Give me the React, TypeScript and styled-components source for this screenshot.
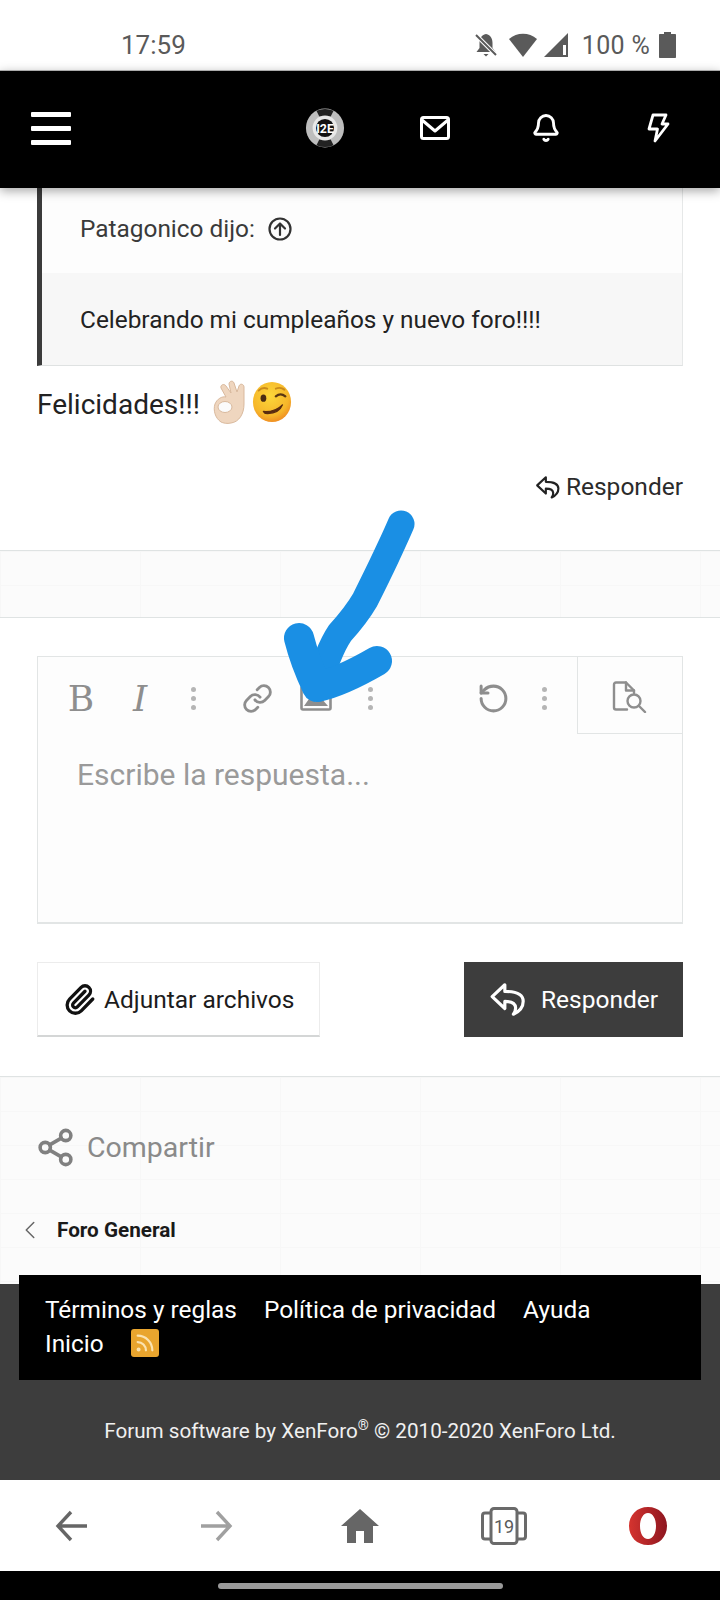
import styled, { createGlobalStyle } from "styled-components";
import { Bell, Link, Paperclip, Rss, RotateCcw, Share2, ChevronLeft } from "lucide-react";

const GlobalStyle = createGlobalStyle`
  html, body {
    margin: 0;
    padding: 0;
    background: #fff;
  }
  * {
    box-sizing: border-box;
  }
`;

const Page = styled.div`
  position: relative;
  width: 720px;
  height: 1600px;
  overflow: hidden;
  background: #fff;
  color: #222;
  font-family: Roboto, "Liberation Sans", sans-serif;
`;
const StatusBar = styled.div`
  height: 70px;
  padding: 20px 44px 0 121px;
  display: flex;
  align-items: center;
  justify-content: space-between;
  color: #5a5a5a;
  font-size: 26px;
`;
const StatusIcons = styled.div`
  display: flex;
  align-items: center;
  gap: 4px;
`;
const BatteryLabel = styled.span`
  margin: 0 5px 0 9px;
  font-size: 25px;
  letter-spacing: 0.3px;
`;
const NavBar = styled.div`
  position: relative;
  z-index: 2;
  height: 118px;
  padding-bottom: 3px;
  background: #000;
  border-top: 1px solid #aaa;
  box-shadow: 0 3px 10px rgba(0, 0, 0, 0.35);
  display: grid;
  grid-template-columns: 270px 110px 110px 112px 112px;
  align-items: center;
  color: #fff;
`;
const NavCell = styled.div`
  display: flex;
  justify-content: center;
  align-items: center;
`;
const Burger = styled.div`
  width: 40px;
  margin-left: 31px;
  display: flex;
  flex-direction: column;
  gap: 9px;

  span {
    height: 5px;
    background: #fff;
    border-radius: 1px;
  }
`;
const Quote = styled.div`
  margin: 0 37px;
  border-left: 5px solid #3b3b3b;
  border-right: 1px solid #e6e8e8;
  border-bottom: 1px solid #dfe2e2;
`;
const QuoteHead = styled.div`
  height: 85px;
  padding: 3px 0 7px 38px;
  background: #fdfdfd;
  display: flex;
  align-items: center;
  gap: 13px;
  font-size: 24.4px;
  color: #3a3a3a;
`;
const QuoteBody = styled.div`
  height: 92px;
  padding-left: 38px;
  background: #f7f7f7;
  display: flex;
  align-items: center;
  font-size: 24.4px;
`;
const Message = styled.div`
  height: 76px;
  margin: 0 37px;
  padding-top: 1px;
  display: flex;
  align-items: center;
  font-size: 28px;
`;
const Emojis = styled.div`
  margin: -6px 0 0 13px;
  display: flex;
  align-items: center;
  gap: 3px;
`;
const PostActions = styled.div`
  height: 108px;
  margin: 0 37px;
  display: flex;
  justify-content: flex-end;
  align-items: flex-start;
  padding-top: 30px;
`;
const ActionLink = styled.div`
  display: flex;
  align-items: center;
  gap: 5px;
  font-size: 24.5px;
  color: #2b2b2b;
`;
const Band = styled.div`
  height: 68px;
  background-color: #fbfbfb;
  background-image: linear-gradient(#f7f7f7 1px, transparent 1px), linear-gradient(90deg, #f7f7f7 1px, transparent 1px);
  background-size: 140px 34px;
  border-top: 1px solid #dfe3e3;
  border-bottom: 1px solid #dfe3e3;
`;
const ReplyArea = styled.div`
  height: 458px;
  padding: 38px 37px 0;
`;
const Editor = styled.div`
  height: 268px;
  background: #fdfdfd;
  border: 1px solid #e2e5e5;
  border-bottom-width: 2px;
`;
const Toolbar = styled.div`
  height: 77px;
  padding-left: 14px;
  display: flex;
  align-items: center;
  color: #8e8e8e;
`;
const Tool = styled.div<{ $w: number }>`
  width: ${(p) => p.$w}px;
  height: 100%;
  display: flex;
  align-items: center;
  justify-content: center;
  padding-top: 5px;
`;
const Glyph = styled.span<{ $italic?: boolean }>`
  font-family: "DejaVu Serif", "Liberation Serif", serif;
  font-size: 36px;
  font-weight: 400;
  font-style: ${(p) => (p.$italic ? "italic" : "normal")};
  color: #8e8e8e;
`;
const Dots = styled.div`
  display: flex;
  flex-direction: column;
  gap: 4px;

  i {
    width: 5px;
    height: 5px;
    border-radius: 50%;
    background: #b5b5b5;
  }
`;
const Spacer = styled.div`
  flex: 1;
`;
const PreviewCell = styled.div`
  width: 105px;
  height: 100%;
  border-left: 1px solid #e2e5e5;
  border-bottom: 1px solid #e2e5e5;
  display: flex;
  align-items: center;
  justify-content: center;
  padding-top: 3px;
`;
const Placeholder = styled.div`
  padding: 21px 0 0 39px;
  font-size: 30px;
  line-height: 40px;
  color: #9a9a9a;
`;
const ButtonRow = styled.div`
  margin-top: 38px;
  display: flex;
  justify-content: space-between;
`;
const Button = styled.div<{ $dark?: boolean }>`
  height: 75px;
  display: flex;
  align-items: center;
  font-size: 24.5px;
  background: ${(p) => (p.$dark ? "#3d3d3d" : "#fff")};
  color: ${(p) => (p.$dark ? "#fff" : "#1c1c1c")};
  border: 1px solid ${(p) => (p.$dark ? "#3d3d3d" : "#ececec")};
  border-bottom: 2px solid ${(p) => (p.$dark ? "#3d3d3d" : "#d4d6d6")};
`;
const AttachButton = styled(Button)`
  width: 283px;
  padding-left: 25px;
  gap: 8px;
`;
const SendButton = styled(Button)`
  width: 219px;
  padding-left: 24px;
  gap: 14px;
`;
const ShareBand = styled.div`
  height: 208px;
  background-color: #fbfbfb;
  background-image: linear-gradient(#f7f7f7 1px, transparent 1px), linear-gradient(90deg, #f7f7f7 1px, transparent 1px);
  background-size: 140px 34px;
  border-top: 1px solid #dfe3e3;
`;
const ShareRow = styled.div`
  height: 72px;
  margin-top: 34px;
  padding-left: 35px;
  display: flex;
  align-items: center;
  gap: 11px;
  font-size: 28.5px;
  color: #8a8a8a;
`;
const Crumb = styled.div`
  margin-top: 32px;
  padding-left: 15px;
  display: flex;
  align-items: center;
  gap: 12px;
  font-size: 20.7px;
  font-weight: 700;
  color: #1a1a1a;
`;
const Footer = styled.div`
  height: 196px;
  background: #3d3d3d;
  color: #fff;
`;
const FooterLinks = styled.div`
  position: relative;
  top: -9px;
  height: 105px;
  margin: 0 19px;
  padding: 17px 26px 0;
  background: #000;
  font-size: 24.4px;
`;
const FooterRow = styled.div`
  height: 34px;
  display: flex;
  align-items: center;
  gap: 27px;
`;
const RssBadge = styled.div`
  width: 28px;
  height: 28px;
  border-radius: 3px;
  background: #e9a52e;
  display: flex;
  align-items: center;
  justify-content: center;
  color: #fbe3b0;
`;
const Copyright = styled.div`
  margin-top: 26px;
  text-align: center;
  font-size: 20.66px;
  line-height: 32px;
  color: #f0f0f0;

  sup {
    font-size: 14px;
    line-height: 0;
  }
`;
const BrowserBar = styled.div`
  height: 91px;
  background: #fff;
  display: grid;
  grid-template-columns: repeat(5, 1fr);
  align-items: center;
  justify-items: center;
`;
const GestureBar = styled.div`
  height: 30px;
  background: #000;
  display: flex;
  align-items: center;
  justify-content: center;
`;
const Pill = styled.div`
  width: 285px;
  height: 6px;
  border-radius: 3px;
  background: #9a9a9a;
`;
const ArrowOverlay = styled.svg`
  position: absolute;
  left: 270px;
  top: 500px;
  z-index: 3;
`;

const replyPath =
  "M10 3 L2 10.5 L10 18 V13.5 C14.5 13.5 16.6 14.6 16.8 17.4 C16.9 19 16.3 20.4 15.4 21.6 C19.4 19.8 21.6 16.8 21.6 13.4 C21.6 9 17 7.2 10 7.2 Z";

function ReplyIcon({ size, color }: { size: number; color: string }) {
  return (
    <svg width={size} height={size} viewBox="0 0 24 24" fill="none" stroke={color} strokeWidth={2} strokeLinejoin="round">
      <path d={replyPath} />
    </svg>
  );
}

function WinkFace() {
  return (
    <svg width="40" height="42" viewBox="0 0 42 44">
      <defs>
        <radialGradient id="wink" cx="45%" cy="35%" r="70%">
          <stop offset="0%" stopColor="#fcd73a" />
          <stop offset="70%" stopColor="#f6b62a" />
          <stop offset="100%" stopColor="#ee8420" />
        </radialGradient>
      </defs>
      <ellipse cx="21" cy="22" rx="20" ry="21" fill="url(#wink)" />
      <ellipse cx="12" cy="18" rx="3" ry="3.8" fill="#4a2c12" />
      <path d="M25 16 Q30 12 35 16" fill="none" stroke="#5a3612" strokeWidth="2.4" strokeLinecap="round" />
      <path d="M7 10 Q11 6 16 8" fill="none" stroke="#c98a1c" strokeWidth="2" strokeLinecap="round" />
      <path d="M25 8 Q30 6 34 9" fill="none" stroke="#c98a1c" strokeWidth="2" strokeLinecap="round" />
      <path d="M12 32 Q24 33 32 25 Q28 35 14 34 Z" fill="#5a2c10" stroke="#5a2c10" strokeWidth="1.4" strokeLinejoin="round" />
    </svg>
  );
}

function OkHand() {
  return (
    <svg width="36" height="44" viewBox="0 0 36 44">
      <path
        d="M8 42 C2 38 0 30 2 24 C4 19 9 16 13 17 L8 8 C7 5 11 3 13 6 L18 13 L16 4 C16 1 20 0 21 3 L24 12 L26 6 C27 3 31 4 31 7 L31 24 C31 34 26 42 18 43 C14 44 10 43 8 42 Z"
        fill="#efd6bf"
        stroke="#d9b99d"
      />
      <ellipse cx="12" cy="27" rx="7" ry="5.5" fill="#fbfbfb" stroke="#d9b99d" />
    </svg>
  );
}

export default function App() {
  return (
    <Page>
      <GlobalStyle />
      <StatusBar>
        <span>17:59</span>
        <StatusIcons>
          <svg width="26" height="26" viewBox="0 0 26 26" fill="#5a5a5a">
            <path d="M13 2 C8 3 6.5 7 6.5 11 V16 L3.5 20 H22.5 L19.5 16 V11 C19.5 7 18 3 13 2 Z" />
            <path d="M10.5 22 H15.5 L13 24.5 Z" />
            <path d="M3 3 L23 23" stroke="#fff" strokeWidth="4" />
            <path d="M3 3 L23 23" stroke="#5a5a5a" strokeWidth="2" />
          </svg>
          <svg width="30" height="26" viewBox="0 0 30 26" fill="#5a5a5a" style={{ marginLeft: 5 }}>
            <path d="M1 7 C9 0 21 0 29 7 L15 25 Z" />
          </svg>
          <svg width="26" height="26" viewBox="0 0 26 26" style={{ marginLeft: 1 }}>
            <path d="M25 1 V25 H1 Z" fill="#5a5a5a" />
            <path d="M20 13 H23 V23 H20 Z" fill="#fff" />
          </svg>
          <BatteryLabel>100 %</BatteryLabel>
          <svg width="17" height="26" viewBox="0 0 17 26" fill="#5a5a5a">
            <path d="M5 0 H12 V2 H16 C16.6 2 17 2.4 17 3 V25 C17 25.6 16.6 26 16 26 H1 C0.4 26 0 25.6 0 25 V3 C0 2.4 0.4 2 1 2 H5 Z" />
          </svg>
        </StatusIcons>
      </StatusBar>

      <NavBar>
        <Burger>
          <span />
          <span />
          <span />
        </Burger>
        <NavCell>
          <svg width="40" height="42" viewBox="0 0 42 42">
            <ellipse cx="21" cy="21" rx="20" ry="20.5" fill="#bdbdbd" />
            <path d="M12 3 Q21 -1 30 3 L27 9 H15 Z M12 39 Q21 43 30 39 L27 33 H15 Z" fill="#222" />
            <circle cx="21" cy="21" r="13" fill="#e8e8e8" />
            <circle cx="21" cy="21" r="9.5" fill="#111" />
            <text x="21" y="26" textAnchor="middle" fontFamily="Roboto, sans-serif" fontWeight="700" fontSize="13" fill="#fff">
              I2E
            </text>
          </svg>
        </NavCell>
        <NavCell>
          <svg width="30" height="24" viewBox="0 0 30 24" fill="none" stroke="#fff" strokeWidth="3" strokeLinejoin="round">
            <rect x="1.5" y="1.5" width="27" height="21" rx="2" />
            <path d="M2 4 L15 15 L28 4" />
          </svg>
        </NavCell>
        <NavCell>
          <Bell size={30} strokeWidth={2.3} />
        </NavCell>
        <NavCell>
          <svg width="24" height="30" viewBox="0 0 24 30" fill="none" stroke="#fff" strokeWidth="2.8" strokeLinejoin="round">
            <path d="M7 2 H20 L16 11 H22 L9 28 L11.5 16 H3 Z" />
          </svg>
        </NavCell>
      </NavBar>

      <Quote>
        <QuoteHead>
          Patagonico dijo:
          <svg width="24" height="24" viewBox="0 0 24 24" fill="none" stroke="#333" strokeWidth="2.2" strokeLinecap="round" strokeLinejoin="round">
            <circle cx="12" cy="12" r="10.5" />
            <path d="M12 18 V6.5 M7 11.5 L12 6.5 L17 11.5" />
          </svg>
        </QuoteHead>
        <QuoteBody>Celebrando mi cumpleaños y nuevo foro!!!!</QuoteBody>
      </Quote>

      <Message>
        Felicidades!!!
        <Emojis>
          <OkHand />
          <WinkFace />
        </Emojis>
      </Message>
      <PostActions>
        <ActionLink>
          <ReplyIcon size={26} color="#222" />
          Responder
        </ActionLink>
      </PostActions>

      <Band />

      <ReplyArea>
        <Editor>
          <Toolbar>
            <Tool $w={58}>
              <Glyph>B</Glyph>
            </Tool>
            <Tool $w={60}>
              <Glyph $italic>I</Glyph>
            </Tool>
            <Tool $w={46}>
              <Dots>
                <i />
                <i />
                <i />
              </Dots>
            </Tool>
            <Tool $w={82}>
              <Link size={31} strokeWidth={2.2} />
            </Tool>
            <Tool $w={36}>
              <svg width="32" height="26" viewBox="0 0 32 26" fill="none" stroke="#8e8e8e" strokeWidth="2.6">
                <rect x="1.5" y="1.5" width="29" height="23" rx="1.5" />
                <path d="M4 21 L11 11 L16 17 L21 13 L28 21 Z" fill="#8e8e8e" stroke="none" />
              </svg>
            </Tool>
            <Tool $w={72}>
              <Dots>
                <i />
                <i />
                <i />
              </Dots>
            </Tool>
            <Spacer />
            <Tool $w={60}>
              <RotateCcw size={33} strokeWidth={2.2} />
            </Tool>
            <Tool $w={42}>
              <Dots>
                <i />
                <i />
                <i />
              </Dots>
            </Tool>
            <Tool $w={12} />
            <PreviewCell>
              <svg width="36" height="32" viewBox="0 0 36 32" fill="none" stroke="#8e8e8e" strokeWidth="2.4" strokeLinecap="round" strokeLinejoin="round">
                <path d="M15 28.5 H4 C2.8 28.5 2 27.7 2 26.5 V3.5 C2 2.3 2.8 1.5 4 1.5 H14 L22 9.5 V12" />
                <path d="M14 1.5 V9.5 H22" />
                <circle cx="22" cy="20" r="6.5" />
                <path d="M27 25 L33 31" />
              </svg>
            </PreviewCell>
          </Toolbar>
          <Placeholder>Escribe la respuesta...</Placeholder>
        </Editor>
        <ButtonRow>
          <AttachButton>
            <Paperclip size={33} strokeWidth={2.4} color="#111" />
            Adjuntar archivos
          </AttachButton>
          <SendButton $dark>
            <ReplyIcon size={38} color="#fff" />
            Responder
          </SendButton>
        </ButtonRow>
      </ReplyArea>

      <ShareBand>
        <ShareRow>
          <Share2 size={41} strokeWidth={2.1} color="#808080" />
          Compartir
        </ShareRow>
        <Crumb>
          <ChevronLeft size={30} strokeWidth={1.2} color="#666" />
          Foro General
        </Crumb>
      </ShareBand>

      <Footer>
        <FooterLinks>
          <FooterRow>
            <span>Términos y reglas</span>
            <span>Política de privacidad</span>
            <span>Ayuda</span>
          </FooterRow>
          <FooterRow>
            <span>Inicio</span>
            <RssBadge>
              <Rss size={22} strokeWidth={2.4} />
            </RssBadge>
          </FooterRow>
        </FooterLinks>
        <Copyright>
          Forum software by XenForo<sup>®</sup> © 2010-2020 XenForo Ltd.
        </Copyright>
      </Footer>

      <BrowserBar>
        <svg width="34" height="32" viewBox="0 0 34 32" fill="none" stroke="#666" strokeWidth="3.4">
          <path d="M32 16 H3 M16 2 L3 16 L16 30" />
        </svg>
        <svg width="34" height="32" viewBox="0 0 34 32" fill="none" stroke="#a0a0a0" strokeWidth="3.4">
          <path d="M2 16 H31 M18 2 L31 16 L18 30" />
        </svg>
        <svg width="38" height="34" viewBox="0 0 38 34" fill="#666">
          <path d="M19 0 L38 17 H32 V34 H23 V22 H15 V34 H6 V17 H0 Z" />
        </svg>
        <svg width="46" height="38" viewBox="0 0 46 38">
          <g fill="none" stroke="#6a6a6a" strokeWidth="3">
            <rect x="10" y="1.5" width="26" height="35" rx="3" />
            <path d="M10 6 H4 C2.5 6 1.5 7 1.5 8.5 V29.5 C1.5 31 2.5 32 4 32 H10" />
            <path d="M36 6 H42 C43.5 6 44.5 7 44.5 8.5 V29.5 C44.5 31 43.5 32 42 32 H36" />
          </g>
          <text x="23" y="25.5" textAnchor="middle" fontFamily="Roboto, sans-serif" fontSize="18" fill="#5a5a5a">
            19
          </text>
        </svg>
        <svg width="38" height="38" viewBox="0 0 38 38">
          <defs>
            <linearGradient id="opera" x1="0" x2="1" y1="0" y2="0">
              <stop offset="0%" stopColor="#d5342f" />
              <stop offset="100%" stopColor="#8e1620" />
            </linearGradient>
          </defs>
          <path
            fillRule="evenodd"
            d="M19 0 C30 0 38 8 38 19 C38 30 30 38 19 38 C8 38 0 30 0 19 C0 8 8 0 19 0 Z M19 6 C14 6 11 12 11 19 C11 26 14 32 19 32 C24 32 27 26 27 19 C27 12 24 6 19 6 Z"
            fill="url(#opera)"
          />
        </svg>
      </BrowserBar>
      <GestureBar>
        <Pill />
      </GestureBar>

      <ArrowOverlay width="150" height="220" viewBox="0 0 150 220" fill="none" stroke="#1a8fe4" strokeLinecap="round" strokeLinejoin="round">
        <path strokeWidth="27" d="M131 24 C125 38 122 44 116 57 C108 74 103 84 95 100 C88 112 80 122 70 133 C60 148 54 165 48 188" />
        <path strokeWidth="30" d="M29 138 C33 154 39 170 47 187 C66 183 88 172 107 161" />
      </ArrowOverlay>
    </Page>
  );
}
